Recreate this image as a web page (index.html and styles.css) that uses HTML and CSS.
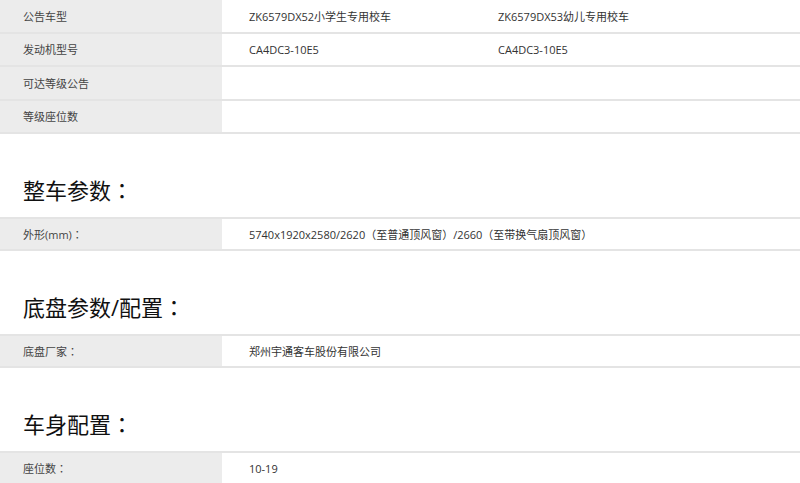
FILE: index.html
```html
<!DOCTYPE html>
<html>
<head>
  <title>车型参数</title>
  <link rel="stylesheet" href="styles.css">
</head>
<body>
  <div class="spec-table first">
    <div class="spec-row">
      <div class="spec-label">公告车型</div>
      <div class="spec-value">ZK6579DX52小学生专用校车</div>
      <div class="spec-value">ZK6579DX53幼儿专用校车</div>
    </div>
    <div class="spec-row">
      <div class="spec-label">发动机型号</div>
      <div class="spec-value">CA4DC3-10E5</div>
      <div class="spec-value">CA4DC3-10E5</div>
    </div>
    <div class="spec-row">
      <div class="spec-label">可达等级公告</div>
      <div class="spec-value"></div>
      <div class="spec-value"></div>
    </div>
    <div class="spec-row">
      <div class="spec-label">等级座位数</div>
      <div class="spec-value"></div>
      <div class="spec-value"></div>
    </div>
  </div>

  <h2 class="section-title">整车参数<span class="colon">：</span></h2>
  <div class="spec-table">
    <div class="spec-row">
      <div class="spec-label">外形(mm)<span class="colon">：</span></div>
      <div class="spec-value wide">5740x1920x2580/2620（至普通顶风窗）/2660（至带换气扇顶风窗）</div>
    </div>
  </div>

  <h2 class="section-title">底盘参数/配置<span class="colon">：</span></h2>
  <div class="spec-table">
    <div class="spec-row">
      <div class="spec-label">底盘厂家<span class="colon">：</span></div>
      <div class="spec-value wide">郑州宇通客车股份有限公司</div>
    </div>
  </div>

  <h2 class="section-title">车身配置<span class="colon">：</span></h2>
  <div class="spec-table">
    <div class="spec-row">
      <div class="spec-label">座位数<span class="colon">：</span></div>
      <div class="spec-value wide">10-19</div>
    </div>
  </div>
</body>
</html>
```

FILE: styles.css
```css
body {
  margin: 0;
  background: #fff;
  font-family: "Open Sans", "Noto Sans CJK SC", sans-serif;
  color: #333;
}
.spec-table {
  border-top: 2px solid #e4e4e4;
}
.spec-row {
  display: flex;
  height: 32px;
  box-sizing: border-box;
  border-bottom: 2px solid #e4e4e4;
  font-size: 11px;
}
.spec-table.first {
  border-top: 0;
}
.spec-table.first .spec-row {
  height: 33.5px;
}
.spec-label {
  width: 222px;
  flex-shrink: 0;
  background: #ececec;
  padding-left: 23px;
  box-sizing: border-box;
  display: flex;
  align-items: center;
  color: #444;
}
.spec-value {
  width: 249px;
  padding-left: 27px;
  box-sizing: border-box;
  display: flex;
  align-items: center;
  white-space: nowrap;
}
.spec-value.wide {
  width: auto;
  flex: 1;
}
.colon {
  font-family: "Noto Sans CJK JP", sans-serif;
}
.section-title {
  margin: 0;
  padding: 41px 0 13px 23px;
  font-size: 22px;
  line-height: 28px;
  font-weight: normal;
  color: #111;
}
```
